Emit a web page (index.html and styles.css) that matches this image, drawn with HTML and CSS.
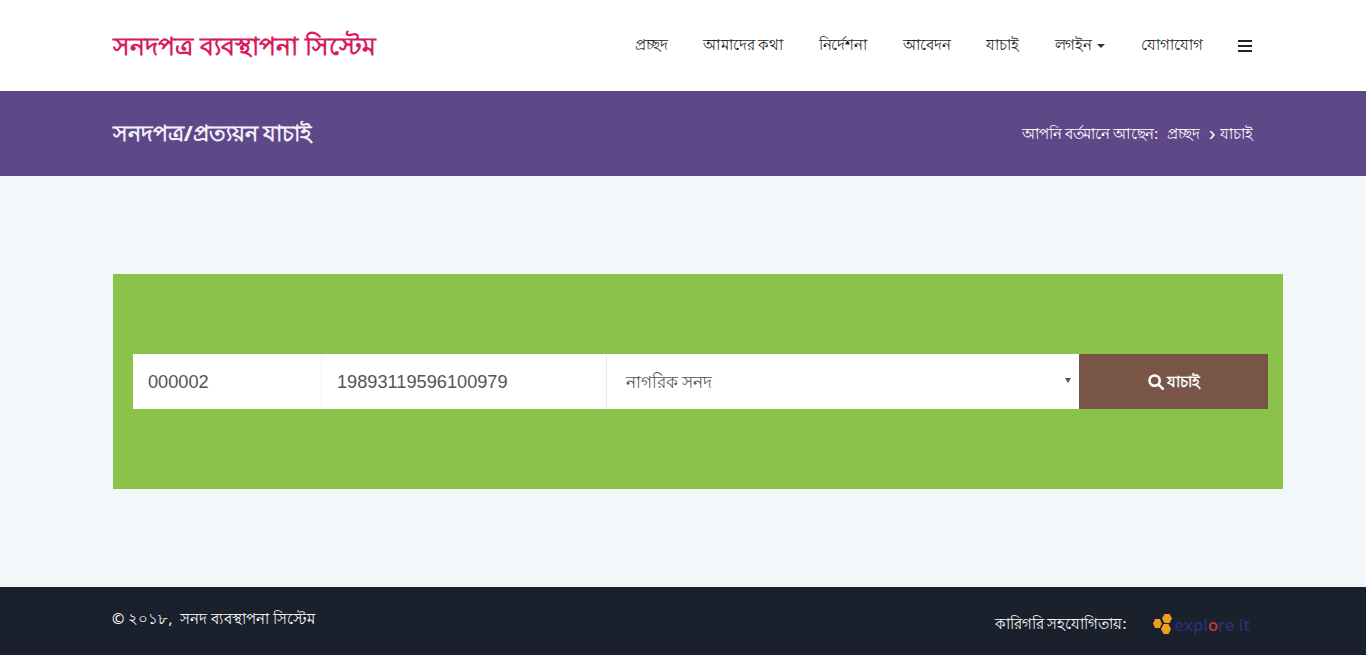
FILE: index.html
```html
<!DOCTYPE html>
<html lang="bn">
<head>
<meta charset="utf-8">
<title>সনদপত্র ব্যবস্থাপনা সিস্টেম</title>
<link rel="stylesheet" href="styles.css">
</head>
<body>
<header class="topbar">
  <a class="brand" href="#">সনদপত্র ব্যবস্থাপনা সিস্টেম</a>
  <nav class="nav">
    <a href="#">প্রচ্ছদ</a>
    <a href="#">আমাদের কথা</a>
    <a href="#">নির্দেশনা</a>
    <a href="#">আবেদন</a>
    <a href="#">যাচাই</a>
    <a href="#">লগইন <span class="caret"></span></a>
    <a href="#">যোগাযোগ</a>
    <a href="#" class="burger" aria-label="menu"><span></span><span></span><span></span></a>
  </nav>
</header>
<section class="titlebar">
  <h1>সনদপত্র/প্রত্যয়ন যাচাই</h1>
  <div class="crumbs"><span class="here">আপনি বর্তমানে আছেন:</span><a href="#">প্রচ্ছদ</a><span class="sep">›</span><span>যাচাই</span></div>
</section>
<main class="content">
  <form class="panel">
    <input class="field f1" type="text" value="000002">
    <input class="field f2" type="text" value="19893119596100979">
    <div class="selectbox"><span>নাগরিক সনদ</span><i class="arrow"></i></div>
    <button class="go" type="button">
      <svg width="16" height="16" viewBox="0 0 15 15" fill="none" stroke="#fff" stroke-width="2.4"><circle cx="6.2" cy="6.2" r="4.8"/><path d="M9.8 9.8 L14 14" stroke-linecap="round"/></svg>
      যাচাই
    </button>
  </form>
</main>
<footer class="footer">
  <div class="copy">© ২০১৮,&nbsp; সনদ ব্যবস্থাপনা সিস্টেম</div>
  <div class="credit">
    <span>কারিগরি সহযোগিতায়:</span>
    <div class="logo">
      <svg width="20" height="22" viewBox="0 0 20 22" fill="#eda01a"><polygon points="0,10.5 2.2,6 6.8,6 9,10.5 6.8,15 2.2,15"/><polygon points="9,5.5 11.5,1 16.5,1 19,5.5 16.5,10 11.5,10"/><polygon points="8,16 10.5,11 15.5,11 18,16 15.5,21 10.5,21"/></svg>
      <span class="ex">expl<span class="oo">o</span>re it</span>
    </div>
  </div>
</footer>
</body>
</html>
```
FILE: styles.css
```css
* { box-sizing: border-box; }
html, body { margin: 0; padding: 0; background: #fff; }
body { font-family: "Noto Sans", "Liberation Sans", "Noto Sans CJK SC", sans-serif; color: #333; height: 657px; overflow: hidden; }
a { color: inherit; text-decoration: none; }

.topbar { height: 91px; padding: 0 114px 0 113px; display: flex; align-items: center; justify-content: space-between; }
.brand { font-size: 25.2px; font-weight: 700; color: #d81b60; line-height: 1; letter-spacing: 0.06px; }
.nav { display: flex; align-items: center; gap: 35.7px; font-size: 15px; letter-spacing: -0.2px; color: #222; }
.caret { display: inline-block; border-top: 4px solid #333; border-left: 4px solid transparent; border-right: 4px solid transparent; vertical-align: middle; margin-left: 2px; }
.burger { display: flex; flex-direction: column; gap: 3px; width: 14px; }
.burger span { height: 2px; background: #222; display: block; }

.titlebar { height: 85px; background: #5f4888; color: #fff; padding: 2px 113px 0 113px; display: flex; align-items: center; justify-content: space-between; }
.titlebar h1 { margin: 0; font-size: 21.8px; font-weight: 700; color: #f3f0f8; letter-spacing: -0.05px; }
.crumbs { display: flex; align-items: center; gap: 9px; font-size: 14.7px; }
.crumbs .here { letter-spacing: -0.35px; }
.crumbs .sep { margin: -3px -4.4px 0 0; font-family: "Liberation Sans", sans-serif; font-size: 20px; line-height: 1; }

.content { height: 411px; background: #f2f7fa; padding: 98px 83px 0 113px; }
.panel { height: 215px; background: #8bc34a; padding: 0 15px 0 20px; display: flex; align-items: center; }
.field, .selectbox { height: 55px; background: #fff; border: 0; color: #555; }
.field { font: 18.2px "Liberation Sans", Arial, sans-serif; padding: 1px 15px 0; outline: 0; border-right: 1px solid #f0f3f5; }
.f1 { width: 189px; }
.f2 { width: 285px; border-right-color: #e6eaee; }
.selectbox { width: 473px; padding: 3px 8px 0 19px; display: flex; align-items: center; justify-content: space-between; font-size: 16.5px; }
.arrow { border-top: 5px solid #555; border-left: 3px solid transparent; border-right: 3px solid transparent; margin-top: -6px; }
.go { width: 189px; height: 55px; padding: 1px 0 0; background: #795548; color: #fff; border: 0; font-family: inherit; font-size: 15px; font-weight: 700; display: flex; align-items: center; justify-content: center; gap: 3px; }

.footer { height: 68px; background: #1a202c; color: #fff; padding: 0 116px 0 112px; display: flex; justify-content: space-between; }
.copy { font-size: 14.8px; padding-top: 20px; letter-spacing: 0.06px; }
.credit { display: flex; align-items: center; gap: 27px; font-size: 14.9px; padding-top: 6px; align-self: center; }
.logo { display: flex; align-items: center; gap: 1px; }
.ex { font: 600 16.5px "Open Sans", sans-serif; color: #25326e; letter-spacing: 0; }
.oo { color: #c8323c; }
```
